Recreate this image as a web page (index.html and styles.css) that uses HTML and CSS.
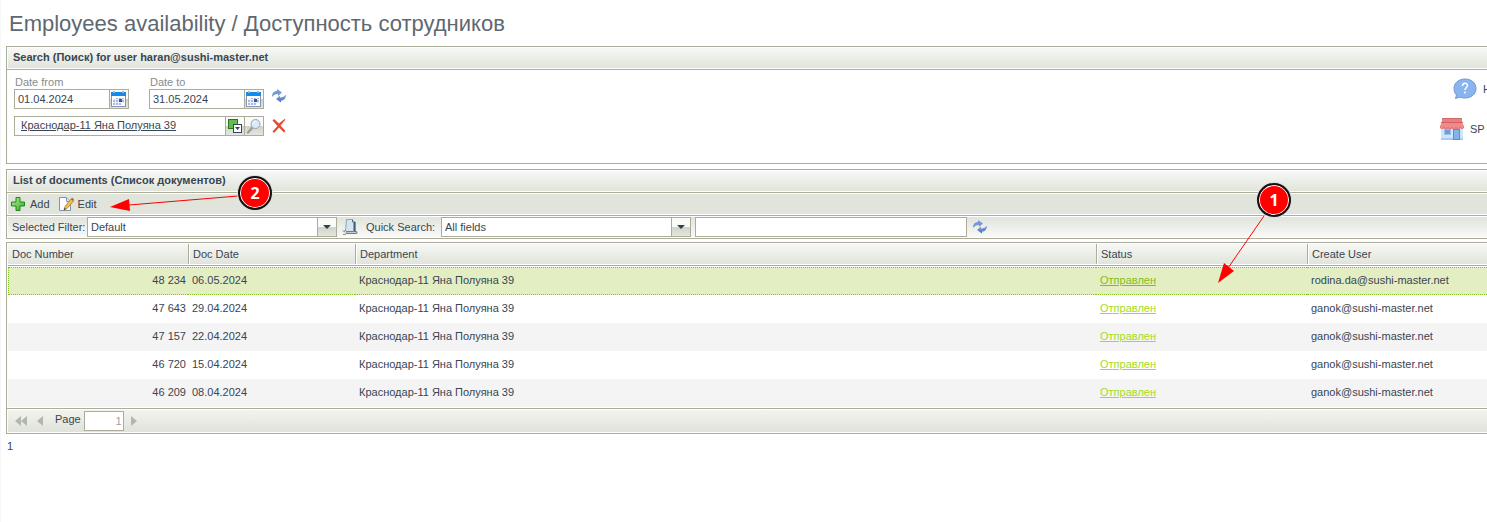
FILE: index.html
```html
<!DOCTYPE html>
<html lang="en">
<head>
    <meta charset="UTF-8">
    <meta name="viewport" content="width=device-width, initial-scale=1.0">
    <title>Employees availability</title>
    <link rel="stylesheet" href="styles.css">
</head>
<body>

    <!-- Shared icons -->
    <svg class="icon-defs" aria-hidden="true">
        <defs>
            <linearGradient id="blueFade" x1="0" y1="0" x2="0" y2="1">
                <stop offset="0" stop-color="#8fb2e6"/>
                <stop offset="1" stop-color="#3f69b5"/>
            </linearGradient>
            <linearGradient id="greenFade" x1="0" y1="0" x2="1" y2="1">
                <stop offset="0" stop-color="#b4ee9a"/>
                <stop offset="1" stop-color="#35a81f"/>
            </linearGradient>
            <symbol id="icon-calendar" viewBox="0 0 16 16">
                <rect x="0.5" y="1.5" width="14" height="14" fill="#fff" stroke="#8496ad"/>
                <rect x="0" y="1" width="15" height="4" fill="#0f8cee"/>
                <path d="M2 1h2M11 1h2" stroke="#a9b4bd" stroke-width="2"/>
                <path d="M4 7h9v5H4zM2 9h11v3H2zM2 12h8v2H2z" fill="#a9bbe3"/>
                <path d="M4.500 7v7M7.500 7v7M10.500 7v5M2 8.500h11M2 11.500h11" stroke="#e9eefa"/>
                <rect x="8" y="8" width="3" height="3" fill="#3455ab"/>
            </symbol>
            <symbol id="icon-refresh" viewBox="0 0 16 16">
                <path d="M1 9C1 5 3 3 6 3V1l5 3.500L7 8V6C4.500 6 2.500 7 1 9z" fill="#7399d8"/>
                <path d="M15 6.500C15 10.500 13 12.500 10 12.500v2L5 11l4-3.500v2C11.500 9.500 13.500 8.500 15 6.500z" fill="url(#blueFade)"/>
            </symbol>
        </defs>
    </svg>

    <h1>Employees availability / Доступность сотрудников</h1>

    <!-- Search panel -->
    <section class="panel">
        <h2 class="bar">Search (Поиск) for user haran@sushi-master.net</h2>
        <div class="search-body">
            <div class="search-form">
                <div class="form-row">
                    <div class="date-group">
                        <label for="dateFrom">Date from</label>
                        <div class="field">
                            <input type="text" id="dateFrom" value="01.04.2024">
                            <button type="button" aria-label="Pick date from"><svg width="16" height="16"><use href="#icon-calendar"/></svg></button>
                        </div>
                    </div>
                    <div class="date-group">
                        <label for="dateTo">Date to</label>
                        <div class="field">
                            <input type="text" id="dateTo" value="31.05.2024">
                            <button type="button" aria-label="Pick date to"><svg width="16" height="16"><use href="#icon-calendar"/></svg></button>
                        </div>
                    </div>
                    <button type="button" class="icon-button refresh" aria-label="Refresh"><svg width="16" height="16"><use href="#icon-refresh"/></svg></button>
                </div>
                <div class="form-row">
                    <div class="field lookup">
                        <a href="#">Краснодар-11 Яна Полуяна 39</a>
                        <button type="button" aria-label="Select department">
                            <svg width="16" height="16" viewBox="0 0 16 16">
                                <rect x="1.500" y="1.500" width="9" height="9" fill="#63bb4d" stroke="#1f7a17"/>
                                <rect x="6.500" y="6.500" width="8" height="8" fill="#fff" stroke="#32465e"/>
                                <path d="M8 9h5l-2.500 3z" fill="#32465e"/>
                            </svg>
                        </button>
                        <button type="button" aria-label="View department">
                            <svg width="16" height="16" viewBox="0 0 16 16">
                                <path d="M2 14.500l4.500-5" stroke="#9b9b9b" stroke-width="2.500" stroke-linecap="round"/>
                                <circle cx="9.500" cy="6" r="4.500" fill="#dbe8fb" stroke="#9aa3b0"/>
                                <path d="M7 5.500c.5-1.500 2-2.500 3.500-2" stroke="#fff" fill="none"/>
                            </svg>
                        </button>
                    </div>
                    <button type="button" class="icon-button" aria-label="Clear">
                        <svg width="16" height="16" viewBox="0 0 16 16">
                            <path d="M1.500 2.500L3 1l5 4.500L13.500 1l1 .5L9.500 7.500l5 5.500-1.500 1.500L8 9.500 3 15l-1.500-1.500L6.500 8z" fill="#e8482b"/>
                        </svg>
                    </button>
                </div>
            </div>
            <div class="side-links">
                <a href="#" class="help-link">
                    <svg width="24" height="22" viewBox="0 0 24 22">
                        <path d="M12 1C5.500 1 1 5 1 10.500c0 3 1 5 2.500 6.500L2.500 20.500 7 19c1.500.8 3 1 5 1 6.500 0 11-4 11-9.500S18.500 1 12 1z" fill="#8ab4ee" stroke="#6f97d8"/>
                        <path d="M9.500 8c0-3.500 5-3.500 5-.5 0 2-2.500 2-2.500 4.500M12 13.500v2" fill="none" stroke="#fff" stroke-width="1.500"/>
                    </svg>
                    <span>H</span>
                </a>
                <a href="#" class="shop-link">
                    <svg width="24" height="24" viewBox="0 0 24 24">
                        <rect x="1" y="9" width="22" height="14" fill="#cfe6f8"/>
                        <rect x="1" y="21" width="22" height="2" fill="#a6cdef"/>
                        <rect x="4.500" y="12.500" width="6" height="5" fill="#6d9ee2" stroke="#9cc0ee"/>
                        <rect x="13.500" y="12.500" width="6" height="10" fill="#86b2ec" stroke="#5a8bd6"/>
                        <path d="M2 1h20v4H2z" fill="#e98080"/>
                        <path d="M2 1.500h20" stroke="#d3686b"/>
                        <path d="M2 5h20l2 4a2 2 0 0 1-4 1 2 2 0 0 1-4 0 2 2 0 0 1-4 0 2 2 0 0 1-4 0 2 2 0 0 1-4 0 2 2 0 0 1-4-1z" fill="#f28a8a"/>
                        <path d="M1 5.500h22" stroke="#cf5f63"/>
                        <path d="M0 9a2 2 0 0 0 4 1 2 2 0 0 0 4 0 2 2 0 0 0 4 0 2 2 0 0 0 4 0 2 2 0 0 0 4 0 2 2 0 0 0 4-1" fill="none" stroke="#e06c70"/>
                    </svg>
                    <span>SP</span>
                </a>
            </div>
        </div>
    </section>

    <!-- Documents panel -->
    <section class="panel">
        <h2 class="bar">List of documents (Список документов)</h2>
        <div class="bar toolbar">
            <button type="button" class="tool">
                <svg width="16" height="16" viewBox="0 0 16 16">
                    <path d="M6 1.500h4V6h4.500v4H10v4.500H6V10H1.500V6H6z" fill="url(#greenFade)" stroke="#1d8a14"/>
                </svg>
                Add
            </button>
            <button type="button" class="tool">
                <svg width="16" height="16" viewBox="0 0 16 16">
                    <path d="M1.500 1.500h7l4 4v9h-11z" fill="#fbfdff" stroke="#7e93b8"/>
                    <path d="M8.500 1.500v4h4" fill="#dfe7f2" stroke="#7e93b8"/>
                    <path d="M6 14l1-3.500L13 3l2.500 2L9 12.500z" fill="#f5c04a" stroke="#a8772a" stroke-width=".8"/>
                    <path d="M13 3l1-1.500L16 3.500 15.500 5z" fill="#c4554a"/>
                    <path d="M6 14l.5-2 1.500 1z" fill="#333"/>
                </svg>
                Edit
            </button>
        </div>
        <div class="bar filterbar">
            <label for="filter">Selected Filter:</label>
            <div class="field combo">
                <select id="filter"><option>Default</option></select>
                <span class="arrow"></span>
            </div>
            <button type="button" class="icon-button" aria-label="Filter settings">
                <svg width="16" height="16" viewBox="0 0 16 16">
                    <path d="M4.500.5h6L13 3v9.500H3.500z" fill="#d5e5ef" stroke="#8ea2bb"/>
                    <path d="M10.500.5V3H13" fill="#fff" stroke="#56688a"/>
                    <path d="M12.500 3v9" stroke="#3f5a80" stroke-width="2"/>
                    <path d="M5 13.500h9" stroke="#7a7d80" stroke-width="3" stroke-linecap="round"/>
                    <path d="M4 13.500h10" stroke="#c9cccd" stroke-linecap="round"/>
                    <path d="M.5 11.500l2 1.500L3 11l2 2-1.500 2.500H1" fill="#eee" stroke="#777" stroke-width=".8"/>
                </svg>
            </button>
            <label for="quickField">Quick Search:</label>
            <div class="field combo">
                <select id="quickField"><option>All fields</option></select>
                <span class="arrow"></span>
            </div>
            <div class="field quick-text">
                <input type="text" aria-label="Quick search text">
            </div>
            <button type="button" class="icon-button" aria-label="Apply search"><svg width="16" height="16"><use href="#icon-refresh"/></svg></button>
        </div>
    </section>

    <!-- Documents table -->
    <div class="panel grid">
        <table>
            <colgroup>
                <col class="col-number">
                <col class="col-date">
                <col>
                <col class="col-status">
                <col class="col-user">
            </colgroup>
            <thead>
                <tr>
                    <th>Doc Number</th>
                    <th>Doc Date</th>
                    <th>Department</th>
                    <th>Status</th>
                    <th>Create User</th>
                </tr>
            </thead>
            <tbody>
                <tr class="selected">
                    <td>48 234</td>
                    <td>06.05.2024</td>
                    <td>Краснодар-11 Яна Полуяна 39</td>
                    <td><a href="#">Отправлен</a></td>
                    <td>rodina.da@sushi-master.net</td>
                </tr>
                <tr>
                    <td>47 643</td>
                    <td>29.04.2024</td>
                    <td>Краснодар-11 Яна Полуяна 39</td>
                    <td><a href="#">Отправлен</a></td>
                    <td>ganok@sushi-master.net</td>
                </tr>
                <tr>
                    <td>47 157</td>
                    <td>22.04.2024</td>
                    <td>Краснодар-11 Яна Полуяна 39</td>
                    <td><a href="#">Отправлен</a></td>
                    <td>ganok@sushi-master.net</td>
                </tr>
                <tr>
                    <td>46 720</td>
                    <td>15.04.2024</td>
                    <td>Краснодар-11 Яна Полуяна 39</td>
                    <td><a href="#">Отправлен</a></td>
                    <td>ganok@sushi-master.net</td>
                </tr>
                <tr>
                    <td>46 209</td>
                    <td>08.04.2024</td>
                    <td>Краснодар-11 Яна Полуяна 39</td>
                    <td><a href="#">Отправлен</a></td>
                    <td>ganok@sushi-master.net</td>
                </tr>
            </tbody>
        </table>
        <div class="pager">
            <button type="button" class="icon-button" aria-label="First page"><svg width="12" height="10"><path d="M6 0v10L0 5zM12 0v10L6 5z" fill="#b3b6b0"/></svg></button>
            <button type="button" class="icon-button" aria-label="Previous page"><svg width="6" height="10"><path d="M6 0v10L0 5z" fill="#b3b6b0"/></svg></button>
            <label for="page">Page</label>
            <div class="field page-field"><input type="text" id="page" value="1"></div>
            <button type="button" class="icon-button" aria-label="Next page"><svg width="6" height="10"><path d="M0 0v10l6-5z" fill="#b3b6b0"/></svg></button>
        </div>
    </div>

    <p class="total">1</p>

    <!-- Step markers with arrows -->
    <svg class="pointer pointer-edit" width="130" height="24">
        <path d="M128 5L19 14" stroke="#f00"/>
        <path d="M0 16l19-8 1 12z" fill="#f00"/>
    </svg>
    <span class="marker marker-edit">2</span>

    <svg class="pointer pointer-row" width="50" height="72">
        <path d="M46 4L10 56" stroke="#f00"/>
        <path d="M0 71L6 51l10 8z" fill="#f00"/>
    </svg>
    <span class="marker marker-row">1</span>

</body>
</html>
```
FILE: styles.css
```css
html {
    border-left: 1px solid #f6f6f6;
    min-height: 100vh;
}

body {
    margin: 0;
    padding: 8px 0 0 5px;
    overflow: hidden;
    font-family: "Liberation Sans", Arial, sans-serif;
    font-size: 11px;
    line-height: 14px;
    color: #394551;
    background-color: #fff;
}

h1 {
    margin: 0 0 6px;
    padding-left: 3px;
    font-size: 22px;
    font-weight: normal;
    line-height: 32px;
    color: #5f6870;
    white-space: nowrap;
}

input, select, button {
    margin: 0;
    padding: 0;
    border: none;
    border-radius: 0;
    background: none;
    font: inherit;
    color: inherit;
}

button {
    cursor: pointer;
}

svg {
    display: block;
    flex: none;
}

.icon-defs {
    position: absolute;
    width: 0;
    height: 0;
}

/* Panels */
.panel {
    margin-bottom: 5px;
    border: 1px solid #acac9a;
    border-right: none;
}

.bar {
    display: flex;
    align-items: center;
    height: 22px;
    margin: 0;
    padding-left: 6px;
    border-bottom: 1px solid #acac9a;
    box-shadow: inset 1px 1px #fff, inset 0 -1px #fff;
    background: linear-gradient(#f8f9f7, #dfe3d9);
    font-size: 11px;
    white-space: nowrap;
}

h2.bar {
    box-sizing: border-box;
    height: 23px;
    padding-bottom: 2px;
}

/* Inputs with attached buttons */
.field {
    display: flex;
    box-sizing: border-box;
    height: 20px;
    border: 1px solid #acac9a;
    background-color: #fff;
}

.field input, .field select {
    flex: 1;
    min-width: 0;
    padding: 0 3px;
    outline: none;
}

.field button, .arrow {
    display: flex;
    box-sizing: border-box;
    align-items: center;
    justify-content: center;
    width: 19px;
    border-left: 1px solid #acac9a;
    background: linear-gradient(#fafbf9 50%, #ced3c6 50%, #e4e7df);
}

.icon-button {
    display: flex;
    align-items: center;
}

/* Search form */
.search-body {
    display: flex;
    justify-content: space-between;
    height: 93px;
}

.search-form {
    display: flex;
    flex-direction: column;
    gap: 7px;
    padding: 5px 0 0 7px;
}

.form-row {
    display: flex;
    align-items: flex-end;
}

.form-row .icon-button {
    height: 20px;
    margin-left: 7px;
}

.form-row .refresh {
    height: 26px;
}

.date-group {
    width: 115px;
}

.date-group + .date-group {
    margin-left: 20px;
}

.date-group label {
    display: block;
    padding-left: 1px;
    color: #888c8f;
}

.lookup {
    width: 250px;
}

.lookup a {
    flex: 1;
    padding: 1px 0 0 6px;
    color: inherit;
}

.side-links {
    width: 47px;
    padding-top: 8px;
}

.side-links a {
    display: flex;
    align-items: center;
    gap: 6px;
    color: inherit;
    text-decoration: none;
}

.side-links .help-link {
    padding-left: 13px;
}

.shop-link {
    margin-top: 17px;
}

/* List toolbar and filters */
.toolbar {
    gap: 8px;
    padding-left: 3px;
    background: #e0e4da;
}

.tool {
    display: flex;
    align-items: center;
    gap: 4px;
}

.filterbar {
    padding-left: 5px;
    border-bottom: none;
    background: linear-gradient(#dfe3d9, #fafafa);
}

.filterbar label {
    width: 75px;
}

.filterbar .icon-button {
    margin: 0 8px 0 5px;
}

.combo {
    width: 250px;
}

.combo select {
    appearance: none;
    padding-bottom: 1px;
}

.arrow::before {
    content: "";
    border: 4px solid transparent;
    border-top-color: #333f49;
    border-bottom: none;
}

.quick-text {
    width: 272px;
    margin-left: 4px;
}

.panel + .grid {
    margin-top: -2px;
}

/* Grid */
table {
    width: 100%;
    table-layout: fixed;
    border-collapse: separate;
    border-spacing: 0;
    border-left: 1px solid #fff;
}

.col-number {
    width: 180px;
}

.col-date {
    width: 167px;
}

.col-status {
    width: 211px;
}

.col-user {
    width: 180px;
}

th {
    height: 22px;
    padding: 0 4px;
    border-bottom: 1px solid #acac9a;
    box-shadow: inset 0 1px #fff, inset 0 -1px #fff;
    background: linear-gradient(#f8f9f7, #dfe3d9);
    font-weight: normal;
    text-align: left;
}

/* Short separator with a light edge between the headings */
th + th {
    padding-left: 5px;
    background:
        linear-gradient(#acac9a, #acac9a) 0 1px / 1px 20px no-repeat,
        linear-gradient(#fff, #fff) 1px 1px / 1px 20px no-repeat,
        linear-gradient(#f8f9f7, #dfe3d9);
}

tbody::before {
    content: "";
    display: block;
    height: 1px;
}

td {
    box-sizing: border-box;
    height: 28px;
    padding: 0 2px 2px 4px;
    white-space: nowrap;
}

td:first-child {
    text-align: right;
}

tbody tr:nth-child(odd) td {
    background-color: #f4f4f4;
}

tbody tr.selected td {
    border-top: 1px dotted #84c225;
    border-bottom: 1px dotted #84c225;
    background-color: #e3eec2;
}

tbody tr.selected td:first-child {
    border-left: 1px dotted #84c225;
}

td a {
    color: #a2dd24;
}

.selected a {
    color: #84bd1c;
}

/* Pager */
.pager {
    display: flex;
    align-items: center;
    height: 24px;
    margin-top: 1px;
    padding-left: 8px;
    border-top: 1px solid #acac9a;
    box-shadow: inset 1px 1px #fff, inset 0 -1px #fff;
    background: linear-gradient(#f3f4ef, #dfe2d9);
}

.pager .icon-button + .icon-button {
    margin-left: 10px;
}

.pager label {
    margin: 0 3px 4px 12px;
}

.page-field {
    width: 40px;
    margin-right: 7px;
}

.page-field input {
    padding: 0 1px;
    color: #9a9fa3;
    text-align: right;
}

.total {
    margin: 0 1px;
}

/* Step markers */
.pointer {
    position: absolute;
}

.pointer-edit {
    left: 110px;
    top: 191px;
}

.pointer-row {
    left: 1218px;
    top: 212px;
}

.marker {
    position: absolute;
    box-sizing: border-box;
    width: 34px;
    height: 34px;
    border: 2px solid #111;
    border-radius: 50%;
    box-shadow: inset 0 0 0 1px #fff, 0 0 0 1px #ddd;
    background-color: #f00;
    font: bold 16px/30px "Open Sans", sans-serif;
    color: #fff;
    text-align: center;
}

.marker-edit {
    left: 238px;
    top: 176px;
}

.marker-row {
    left: 1257px;
    top: 183px;
}
```
